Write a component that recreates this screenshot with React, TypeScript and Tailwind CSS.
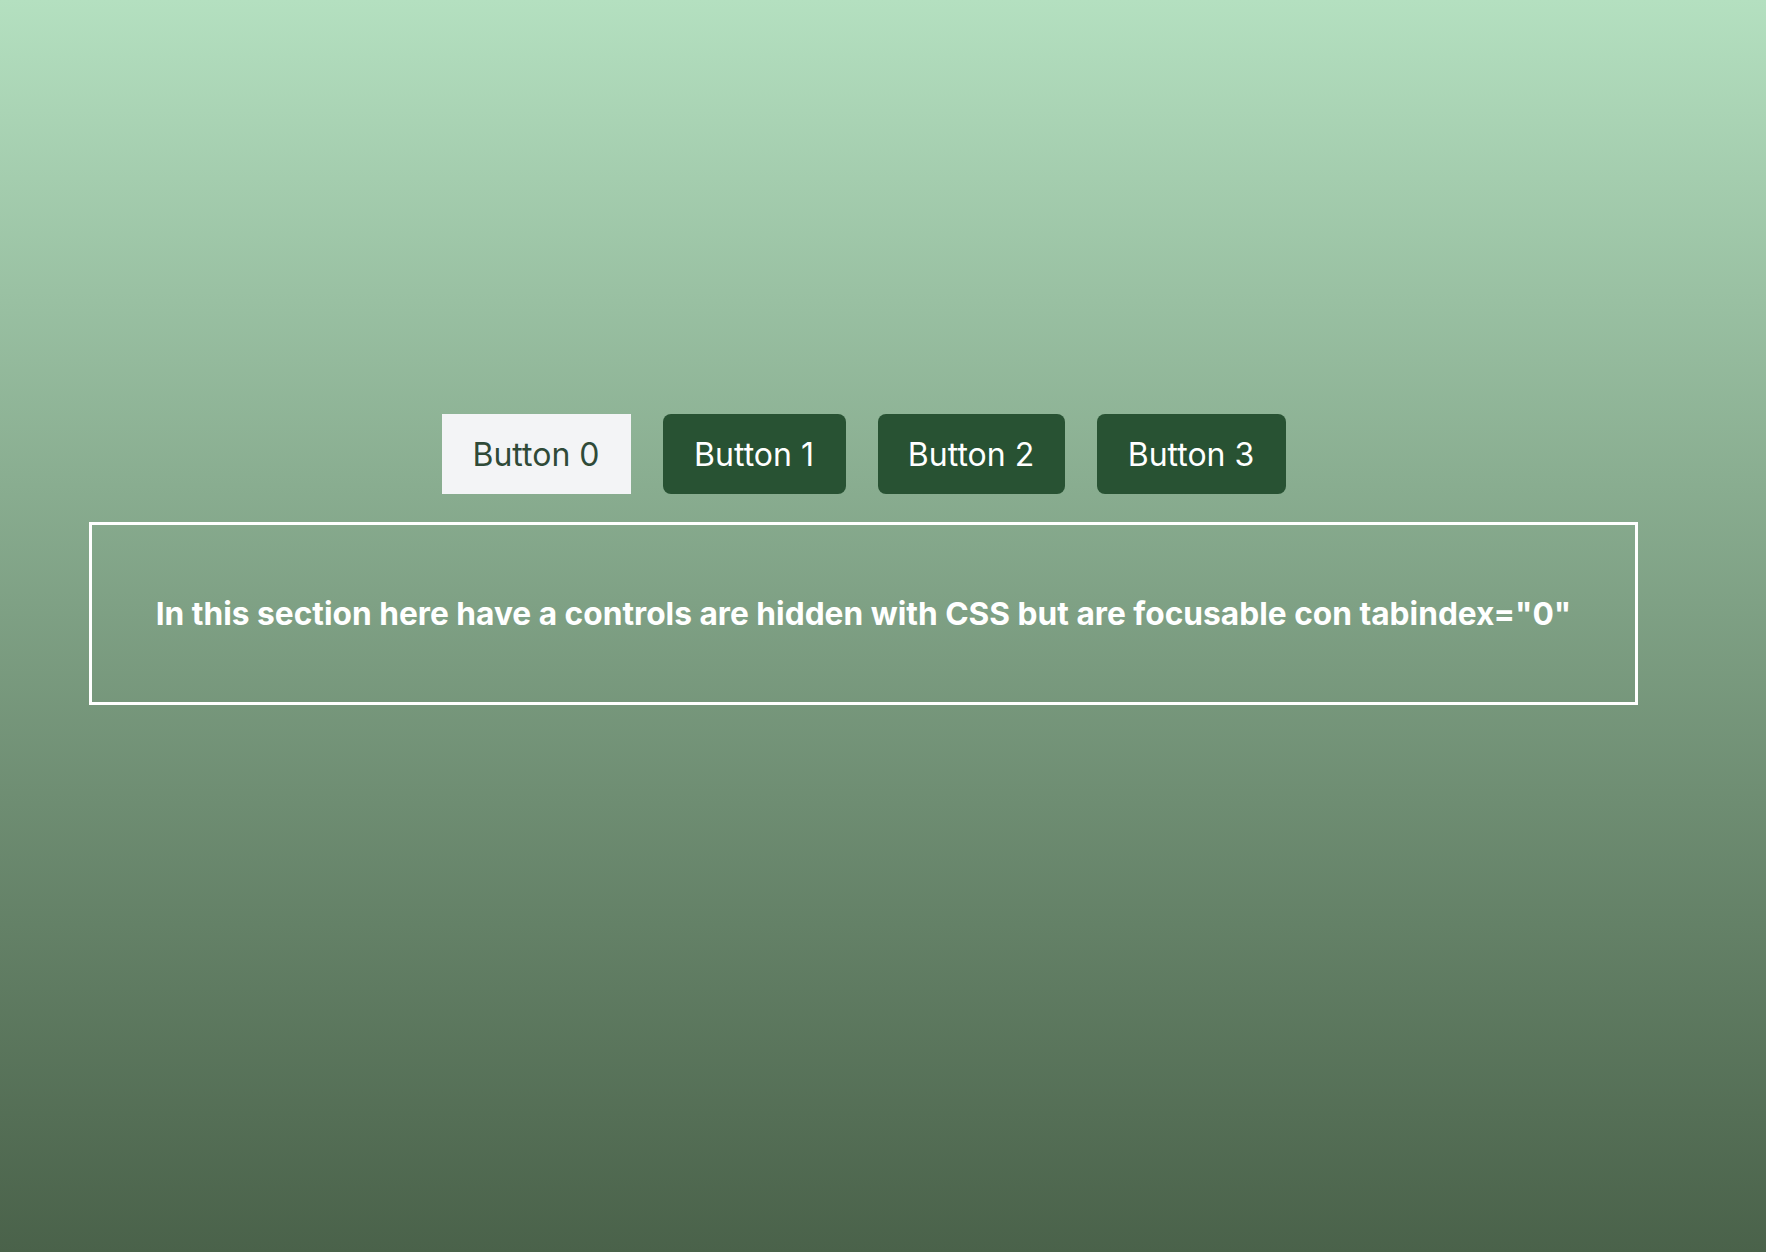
import React from "react";

export default function App() {
  return (
    <div
      className="min-h-[1252px] w-full bg-gradient-to-b from-[#b4e0c0] to-[#4a624a] pt-[414px]"
      style={{ fontFamily: "Inter, 'Noto Sans', sans-serif" }}
    >
      <div className="ml-[89px] w-[1549px]">
        <div className="flex justify-center gap-[32px]">
          <button className="h-[80px] w-[189px] bg-[#f3f4f6] pt-[2px] text-[32px] text-[#2f4a38]">
            Button 0
          </button>
          <button className="h-[80px] w-[183px] rounded-[8px] bg-[#285233] pt-[2px] text-[32px] text-white">
            Button 1
          </button>
          <button className="h-[80px] w-[187px] rounded-[8px] bg-[#285233] pt-[2px] text-[32px] text-white">
            Button 2
          </button>
          <button className="h-[80px] w-[189px] rounded-[8px] bg-[#285233] pt-[2px] text-[32px] text-white">
            Button 3
          </button>
        </div>
        <div className="mt-[28px] flex h-[183px] items-center justify-center border-[3px] border-white">
          <p className="text-[31.7px] font-bold text-white">
            In this section here have a controls are hidden with CSS but are focusable con tabindex="0"
          </p>
        </div>
      </div>
    </div>
  );
}
